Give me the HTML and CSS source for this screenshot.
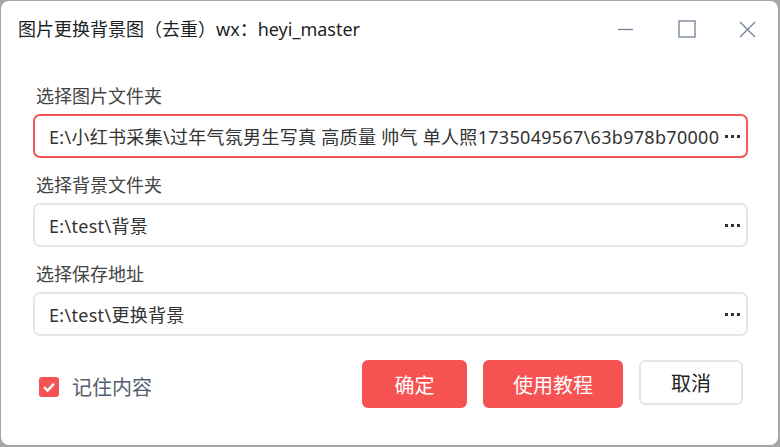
FILE: index.html
```html
<!DOCTYPE html>
<html lang="zh-CN">
<head>
    <meta charset="UTF-8">
    <meta name="viewport" content="width=device-width, initial-scale=1.0">
    <title>图片更换背景图</title>
    <link rel="stylesheet" href="styles.css">
</head>
<body>
    <div class="window">
        <div class="titlebar">
            <span class="title">图片更换背景图（去重）wx：heyi_master</span>
            <div class="controls">
                <span class="ctl">
                    <svg width="16" height="16" viewBox="0 0 16 16"><line x1="0" y1="8.5" x2="15" y2="8.5" stroke="#72819a" stroke-width="1.3"/></svg>
                </span>
                <span class="ctl">
                    <svg width="18" height="18" viewBox="0 0 18 18"><rect x="1" y="1" width="16" height="16" fill="none" stroke="#72819a" stroke-width="1.3"/></svg>
                </span>
                <span class="ctl">
                    <svg width="17" height="17" viewBox="0 0 17 17"><path d="M1 1 L16 16 M16 1 L1 16" stroke="#72819a" stroke-width="1.3"/></svg>
                </span>
            </div>
        </div>

        <div class="form">
            <div class="field">
                <label>选择图片文件夹</label>
                <div class="input active">
                    <span class="value">E:\小红书采集\过年气氛男生写真 高质量 帅气 单人照1735049567\63b978b70000</span>
                    <span class="more"><i></i><i></i><i></i></span>
                </div>
            </div>
            <div class="field">
                <label>选择背景文件夹</label>
                <div class="input">
                    <span class="value">E:\test\背景</span>
                    <span class="more"><i></i><i></i><i></i></span>
                </div>
            </div>
            <div class="field">
                <label>选择保存地址</label>
                <div class="input">
                    <span class="value">E:\test\更换背景</span>
                    <span class="more"><i></i><i></i><i></i></span>
                </div>
            </div>
        </div>

        <div class="footer">
            <div class="remember">
                <span class="checkbox">
                    <svg width="14" height="14" viewBox="0 0 14 14"><path d="M2 7.2 L5.6 10.6 L12 3.6" fill="none" stroke="#fff" stroke-width="2.4"/></svg>
                </span>
                <span>记住内容</span>
            </div>
            <div class="buttons">
                <button class="btn primary ok">确定</button>
                <button class="btn primary guide">使用教程</button>
                <button class="btn cancel">取消</button>
            </div>
        </div>
    </div>
</body>
</html>
```

FILE: styles.css
```css
html, body {
    margin: 0;
    padding: 0;
}
body {
    background-color: #a6a6a6;
    font-family: "Noto Sans", "Noto Sans CJK SC", sans-serif;
    width: 780px;
    height: 447px;
    padding: 1px 2px 2px 1px;
    box-sizing: border-box;
    overflow: hidden;
}
.window {
    background-color: #fff;
    height: 444px;
    border-radius: 8px;
    display: flex;
    flex-direction: column;
}
.titlebar {
    height: 56px;
    display: flex;
    align-items: center;
    justify-content: space-between;
    padding-left: 17px;
}
.title {
    font-size: 18px;
    color: #1f1f1f;
    line-height: 24px;
}
.controls {
    display: flex;
    align-items: center;
    height: 100%;
}
.ctl {
    width: 61px;
    height: 100%;
    display: flex;
    align-items: center;
    justify-content: center;
}
.form {
    padding: 27px 30px 0 32px;
}
.field {
    margin-bottom: 15px;
}
.field label {
    display: block;
    font-size: 18px;
    line-height: 24px;
    color: #444;
    padding-left: 3px;
    margin-bottom: 6px;
}
.input {
    height: 44px;
    box-sizing: border-box;
    border: 2px solid #e5e5ec;
    border-radius: 7px;
    display: flex;
    align-items: center;
    justify-content: space-between;
    padding: 0 6px 0 14px;
}
.input.active {
    border-color: #f35656;
}
.input .value {
    font-size: 18px;
    color: #333;
    letter-spacing: 0.3px;
    white-space: nowrap;
    overflow: hidden;
}
.more {
    display: flex;
    gap: 3px;
    padding-left: 6px;
}
.more i {
    width: 3px;
    height: 3px;
    background-color: #333;
}
.footer {
    display: flex;
    justify-content: space-between;
    align-items: center;
    padding: 9px 35px 0 38px;
}
.remember {
    display: flex;
    align-items: center;
    gap: 13px;
    font-size: 20px;
    color: #555e70;
    padding-top: 5px;
}
.checkbox {
    width: 20px;
    height: 20px;
    border-radius: 3px;
    background-color: #f55353;
    display: flex;
    align-items: center;
    justify-content: center;
}
.buttons {
    display: flex;
    gap: 16px;
}
.btn {
    font-family: inherit;
    font-size: 20px;
    height: 48px;
    border-radius: 6px;
    border: none;
    cursor: pointer;
}
.primary {
    background-color: #f75252;
    color: #fff;
}
.ok {
    width: 105px;
}
.guide {
    width: 140px;
}
.cancel {
    width: 104px;
    height: 45px;
    background-color: #fff;
    border: 2px solid #e4e4ec;
    color: #222;
}
```
